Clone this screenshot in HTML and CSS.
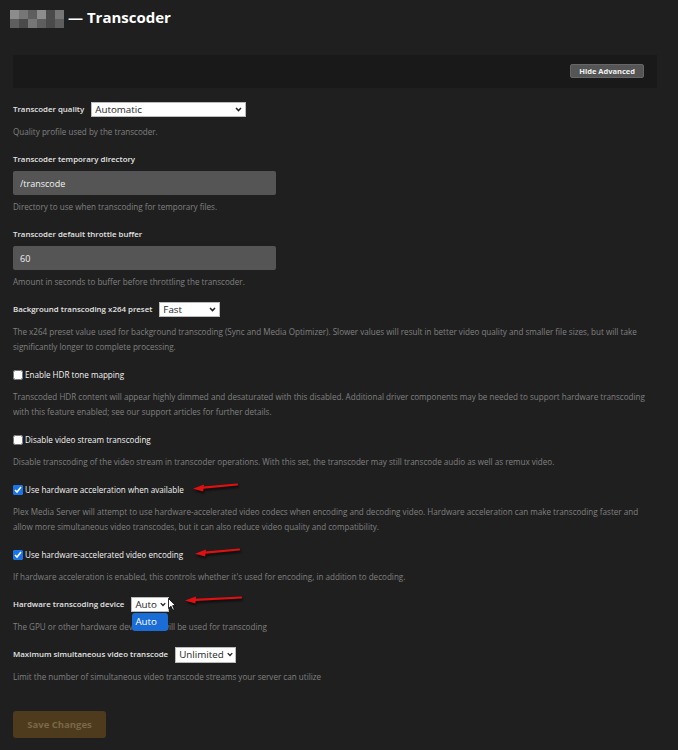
FILE: index.html
```html
<!DOCTYPE html>
<html lang="en">
<head>
  <meta charset="UTF-8" />
  <meta name="viewport" content="width=device-width, initial-scale=1.0"/>
  <title>Transcoder</title>
  <link rel="stylesheet" href="styles.css">
</head>
<body>

<div class="page">
  <h1 class="title">
    <span class="mosaic">
      <i class="c1"></i><i class="c2"></i><i class="c3"></i><i class="c1"></i><i class="c4"></i><i class="c2"></i>
      <i class="c3"></i><i class="c4"></i><i class="c2"></i><i class="c3"></i><i class="c4"></i><i class="c3"></i>
    </span>
    — Transcoder
  </h1>

  <div class="advanced-bar">
    <button type="button" class="btn-advanced">Hide Advanced</button>
  </div>

  <form class="settings">
    <div class="setting">
      <div class="row">
        <label for="quality">Transcoder quality</label>
        <div class="select select-quality">
          <select id="quality"><option>Automatic</option></select>
          <svg class="chev" viewBox="0 0 8 6" width="7" height="5"><path d="M1 1.2 L4 4.3 L7 1.2" /></svg>
        </div>
      </div>
      <p class="help">Quality profile used by the transcoder.</p>
    </div>

    <div class="setting">
      <label class="field-label" for="tmpdir">Transcoder temporary directory</label>
      <input class="text-input" type="text" id="tmpdir" value="/transcode">
      <p class="help help-input">Directory to use when transcoding for temporary files.</p>
    </div>

    <div class="setting">
      <label class="field-label" for="throttle">Transcoder default throttle buffer</label>
      <input class="text-input" type="text" id="throttle" value="60">
      <p class="help help-input">Amount in seconds to buffer before throttling the transcoder.</p>
    </div>

    <div class="setting">
      <div class="row">
        <label for="preset">Background transcoding x264 preset</label>
        <div class="select select-fast">
          <select id="preset"><option>Fast</option></select>
          <svg class="chev" viewBox="0 0 8 6" width="7" height="5"><path d="M1 1.2 L4 4.3 L7 1.2" /></svg>
        </div>
      </div>
      <p class="help">The x264 preset value used for background transcoding (Sync and Media Optimizer). Slower values will result in better video quality and smaller file sizes, but will take significantly longer to complete processing.</p>
    </div>

    <div class="setting">
      <div class="row check-row">
        <input type="checkbox" id="hdr">
        <label for="hdr">Enable HDR tone mapping</label>
      </div>
      <p class="help">Transcoded HDR content will appear highly dimmed and desaturated with this disabled. Additional driver components may be needed to support hardware transcoding with this feature enabled; see our support articles for further details.</p>
    </div>

    <div class="setting">
      <div class="row check-row">
        <input type="checkbox" id="novideo">
        <label for="novideo">Disable video stream transcoding</label>
      </div>
      <p class="help">Disable transcoding of the video stream in transcoder operations. With this set, the transcoder may still transcode audio as well as remux video.</p>
    </div>

    <div class="setting">
      <div class="row check-row">
        <input type="checkbox" id="hwaccel" checked>
        <label for="hwaccel">Use hardware acceleration when available</label>
        <svg class="arrow arrow-1" viewBox="0 0 46 12" width="46" height="12"><path d="M44 2.5 L10 5.6" class="shaft"/><path d="M0 6.8 L11 2.6 L10.2 9.6 Z" class="head"/></svg>
      </div>
      <p class="help">Plex Media Server will attempt to use hardware-accelerated video codecs when encoding and decoding video. Hardware acceleration can make transcoding faster and allow more simultaneous video transcodes, but it can also reduce video quality and compatibility.</p>
    </div>

    <div class="setting">
      <div class="row check-row">
        <input type="checkbox" id="hwenc" checked>
        <label for="hwenc">Use hardware-accelerated video encoding</label>
        <svg class="arrow arrow-2" viewBox="0 0 46 12" width="46" height="12"><path d="M44 2.5 L10 5.6" class="shaft"/><path d="M0 6.8 L11 2.6 L10.2 9.6 Z" class="head"/></svg>
      </div>
      <p class="help">If hardware acceleration is enabled, this controls whether it's used for encoding, in addition to decoding.</p>
    </div>

    <div class="setting">
      <div class="row">
        <label for="device">Hardware transcoding device</label>
        <div class="select select-auto">
          <select id="device"><option>Auto</option></select>
          <svg class="chev" viewBox="0 0 8 6" width="7" height="5"><path d="M1 1.2 L4 4.3 L7 1.2" /></svg>
          <div class="dropdown">Auto</div>
          <svg class="cursor" viewBox="0 0 8 13" width="8" height="13"><path d="M0.5 0.5 L0.5 10.5 L3 8.2 L4.8 12.2 L6.3 11.5 L4.6 7.6 L7.5 7.6 Z"/></svg>
        </div>
        <svg class="arrow arrow-3" viewBox="0 0 58 12" width="58" height="12"><path d="M56 3.5 L10 5.8" class="shaft"/><path d="M0 6.4 L11 2.6 L10.4 9.4 Z" class="head"/></svg>
      </div>
      <p class="help help-device">The GPU or other hardware device that will be used for transcoding</p>
    </div>

    <div class="setting">
      <div class="row">
        <label for="maxvideo">Maximum simultaneous video transcode</label>
        <div class="select select-unlimited">
          <select id="maxvideo"><option>Unlimited</option></select>
          <svg class="chev" viewBox="0 0 8 6" width="7" height="5"><path d="M1 1.2 L4 4.3 L7 1.2" /></svg>
        </div>
      </div>
      <p class="help">Limit the number of simultaneous video transcode streams your server can utilize</p>
    </div>

    <button type="submit" class="btn-save" disabled>Save Changes</button>
  </form>
</div>

</body>
</html>
```

FILE: styles.css
```css
* {
  box-sizing: border-box;
  font-family: 'Open Sans', 'Noto Sans', sans-serif;
}

body {
  margin: 0;
  padding: 0;
  background: #1f1f1f;
  color: #e6e6e6;
}

.page {
  padding: 7px 21px 20px 13px;
}

.title {
  display: flex;
  align-items: center;
  gap: 4px;
  margin: 0 0 28px -3px;
  height: 20px;
  font-size: 15px;
  font-weight: 700;
  color: #fff;
}

.mosaic {
  display: grid;
  grid-template-columns: repeat(6, 9px);
  grid-template-rows: 9px 9px;
  width: 54px;
  margin-top: 3px;
}

.mosaic i { display: block; }
.mosaic .c1 { background: #8c8c8c; }
.mosaic .c2 { background: #767676; }
.mosaic .c3 { background: #5e5e5e; }
.mosaic .c4 { background: #4a4a4a; }

.advanced-bar {
  display: flex;
  justify-content: flex-end;
  align-items: flex-start;
  height: 33px;
  padding: 9px 13px 0 0;
  background: #191919;
  margin-bottom: 14px;
}

.btn-advanced {
  height: 14px;
  padding: 0 8px;
  border: 1px solid #666;
  border-radius: 2px;
  background: #555;
  color: #f2f2f2;
  font-size: 7.5px;
  font-weight: 700;
  line-height: 12px;
}

.setting {
  margin-bottom: 13px;
}

.row {
  position: relative;
  display: flex;
  align-items: center;
  height: 15px;
  gap: 7px;
}

.row label,
.field-label {
  font-size: 7.9px;
  font-weight: 600;
  color: #e4e4e4;
  line-height: 15px;
}

.field-label {
  display: block;
  margin-bottom: 4px;
}

.check-row {
  gap: 2px;
}

.check-row label {
  font-size: 8.1px;
  font-weight: 400;
  color: #f4f4f4;
}

.check-row input[type="checkbox"] {
  width: 10px;
  height: 10px;
  margin: 0;
  accent-color: #1a73e8;
}

.help {
  margin: 7px 0 0;
  font-size: 8.1px;
  line-height: 15px;
  color: #808080;
}

.help-input {
  margin-top: 4px;
}

.text-input {
  display: block;
  width: 263px;
  height: 24px;
  padding: 0 7px;
  border: none;
  border-radius: 2px;
  background: #555;
  color: #f2f2f2;
  font-size: 9px;
}

.select {
  position: relative;
  height: 15px;
}

.select select {
  display: block;
  appearance: none;
  width: 100%;
  height: 100%;
  margin: 0;
  padding: 0 0 0 3px;
  border: 1px solid #bbb;
  border-radius: 0;
  background: #fff;
  color: #1e1e1e;
  font-size: 9.8px;
  line-height: 13px;
}

.select .chev {
  position: absolute;
  right: 4px;
  top: 5px;
  fill: none;
  stroke: #222;
  stroke-width: 1.8;
}

.select-quality { width: 155px; }
.select-fast { width: 61px; }
.select-auto { width: 38px; }
.select-unlimited { width: 61px; height: 16px; }

.select-unlimited .chev,
.select-auto .chev {
  right: 3px;
  width: 6px;
}

.dropdown {
  position: absolute;
  left: 1px;
  top: 16px;
  width: 36px;
  height: 18px;
  padding-left: 3px;
  border-radius: 3px;
  background: #1a6cd6;
  color: #fff;
  font-size: 9.8px;
  line-height: 18px;
}

.cursor {
  position: absolute;
  left: 37px;
  top: 1px;
  fill: #fff;
  stroke: #000;
  stroke-width: 0.8;
}

.arrow {
  position: absolute;
  filter: drop-shadow(1px 2px 1px rgba(0, 0, 0, 0.7));
}

.arrow .shaft {
  fill: none;
  stroke: #e01010;
  stroke-width: 2.2;
  stroke-linecap: round;
}

.arrow .head {
  fill: #e01010;
}

.arrow-1 { left: 180px; top: 0; }
.arrow-2 { left: 182px; top: 0; }
.arrow-3 { left: 172px; top: -3px; }

.btn-save {
  margin-top: 14px;
  width: 93px;
  height: 27px;
  border: none;
  border-radius: 3px;
  background: #4e3b1e;
  color: #7a6747;
  font-size: 9.5px;
  font-weight: 700;
}
```
